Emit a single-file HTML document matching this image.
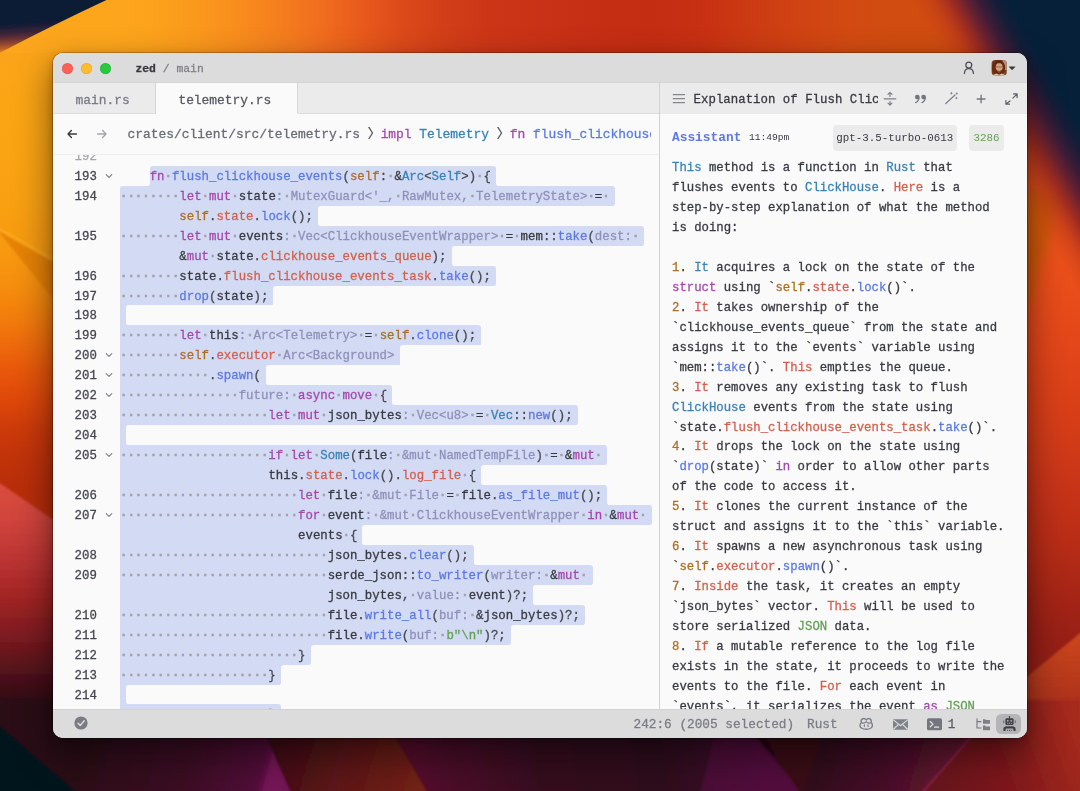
<!DOCTYPE html>
<html lang="en">
<head>
<meta charset="utf-8">
<title>zed / main</title>
<style>
html,body{margin:0;padding:0;}
body{width:1080px;height:791px;overflow:hidden;position:relative;background:#b83014;font-family:"Liberation Mono","Noto Sans CJK SC","DejaVu Sans Mono",monospace;}
.bg{position:absolute;left:0;top:0;display:block;}
.shadow{position:absolute;left:53px;top:53px;width:974px;height:684.6px;border-radius:10px;
 box-shadow:0 0 0 0.6px rgba(0,0,0,.38),0 16px 34px 4px rgba(0,0,0,.42),0 3px 9px rgba(0,0,0,.22);}
.win{position:absolute;left:53px;top:53px;width:974px;height:684.6px;border-radius:10px;overflow:hidden;background:#fafafa;color:#383a41;will-change:transform;}
.abs{position:absolute;}
.titlebar{left:0;top:0;width:974px;height:30.3px;background:#dcdcdd;border-bottom:1px solid #d5d5d6;box-sizing:border-box;}
.tl{position:absolute;top:9.5px;width:11.6px;height:11.6px;border-radius:50%;}
.title{position:absolute;left:82.4px;top:9px;font-size:11.4px;line-height:14px;white-space:pre;color:#7e8087;}
.title b{color:#383a41;font-weight:bold;}
.tabbar{left:0;top:30.3px;width:606.5px;height:30.4px;background:#ebebec;border-bottom:1px solid #dcdcdd;box-sizing:border-box;}
.tab{position:absolute;top:0;height:30.4px;box-sizing:border-box;font-size:12.9px;line-height:35px;white-space:pre;color:#797b83;border-right:1px solid #d6d6d7;border-bottom:1px solid #dcdcdd;}
.tab.on{background:#fafafa;color:#575961;border-bottom:1px solid #fafafa;}
.toolbar{left:0;top:60.7px;width:606.5px;height:41px;background:#fafafa;border-bottom:1px solid #eeeeef;box-sizing:border-box;}
.crumbs{position:absolute;left:74.6px;top:13.5px;font-size:12.92px;line-height:16px;white-space:pre;color:#6a6c74;width:523.6px;overflow:hidden;}
.editor{left:0;top:101.7px;width:606.5px;height:554.6px;overflow:hidden;background:#fafafa;}
.divider{left:606px;top:30.3px;width:1px;height:626px;background:#d1d1d2;}
.sel{position:absolute;background:#d3daf3;}
.wh{position:absolute;background:#fafafa;}
.ln{position:absolute;left:21.6px;width:24px;font-size:12.365px;line-height:19.95px;color:#44464e;white-space:pre;}
.chev{position:absolute;left:50.5px;}
.cl,.al,.ln,.ptitle,.crumbs,.tab,.st,.title{-webkit-text-stroke:.28px currentColor;}
.cl{position:absolute;font-size:12.365px;line-height:19.95px;white-space:pre;color:#383a41;}
.al{position:absolute;left:619px;font-size:12.323px;line-height:19.97px;white-space:pre;color:#383a41;}
.t{color:#383a41}.p{color:#484a50}.k{color:#a449ab}.f{color:#5b79e3}.y{color:#3882b7}.s{color:#ad6e25}
.r{color:#d3604f}.g{color:#649f57}.h{color:#8e91b9}.w{color:#a0a2aa;font-weight:bold;-webkit-text-stroke:.5px currentColor}.n{color:#ad6e25}
.phead{left:607px;top:30.3px;width:367px;height:30.4px;background:#ebebec;border-bottom:1px solid #e8e8e9;box-sizing:border-box;}
.ptitle{position:absolute;left:33.6px;top:8.8px;width:184.6px;overflow:hidden;font-size:12.365px;line-height:16px;white-space:pre;color:#383a41;letter-spacing:.02px;}
.panel{left:607px;top:60.7px;width:367px;height:595.6px;background:#fafafa;overflow:hidden;}
.status{left:0;top:656.3px;width:974px;height:28.3px;background:#dcdcdd;border-top:1px solid #d2d2d3;box-sizing:border-box;}
.st{position:absolute;top:6.7px;font-size:12.75px;line-height:15px;white-space:pre;color:#7b7d85;}
.badge{position:absolute;top:72.3px;height:26px;border-radius:4px;background:#ebebec;font-size:10.85px;line-height:27.4px;white-space:pre;text-align:center;}
svg{display:block;}
.ico{position:absolute;}
</style>
</head>
<body>
<svg class="bg" width="1080" height="791" viewBox="0 0 1080 791">
<defs>
<linearGradient id="gTop" x1="0" y1="0" x2="1080" y2="0" gradientUnits="userSpaceOnUse">
<stop offset="0" stop-color="#fba61c"/><stop offset=".102" stop-color="#fda61c"/><stop offset=".139" stop-color="#fca21c"/>
<stop offset=".185" stop-color="#fa981c"/><stop offset=".222" stop-color="#f98c1d"/><stop offset=".264" stop-color="#f47c1e"/>
<stop offset=".3" stop-color="#f06c1e"/><stop offset=".336" stop-color="#e8591c"/><stop offset=".374" stop-color="#dc491a"/>
<stop offset=".412" stop-color="#d23e18"/><stop offset=".452" stop-color="#cc3617"/><stop offset=".5" stop-color="#c93216"/>
<stop offset=".556" stop-color="#c62e14"/><stop offset=".602" stop-color="#c42d12"/><stop offset=".648" stop-color="#c73012"/>
<stop offset=".694" stop-color="#cc3a13"/><stop offset=".741" stop-color="#d04313"/><stop offset=".787" stop-color="#d24a12"/>
<stop offset=".824" stop-color="#d04c10"/><stop offset="1" stop-color="#d04c10"/>
</linearGradient>
<linearGradient id="gTopV" x1="0" y1="0" x2="0" y2="60" gradientUnits="userSpaceOnUse">
<stop offset="0" stop-color="#fff" stop-opacity=".04"/><stop offset="1" stop-color="#000" stop-opacity=".06"/>
</linearGradient>
<linearGradient id="gTL" x1="0" y1="0" x2="4" y2="57" gradientUnits="userSpaceOnUse">
<stop offset="0" stop-color="#081c36"/><stop offset=".44" stop-color="#111c36"/><stop offset=".59" stop-color="#382338"/>
<stop offset=".7" stop-color="#6a3332"/><stop offset=".81" stop-color="#a6522a"/><stop offset=".93" stop-color="#de821e"/><stop offset="1" stop-color="#f0961c"/>
</linearGradient>
<linearGradient id="gTR" x1="980.8" y1="124.3" x2="1054" y2="82.5" gradientUnits="userSpaceOnUse">
<stop offset="0" stop-color="#c84416" stop-opacity="0"/><stop offset=".23" stop-color="#bc381a" stop-opacity=".55"/><stop offset=".41" stop-color="#9c2a22" stop-opacity=".92"/>
<stop offset=".56" stop-color="#6a2230"/><stop offset=".7" stop-color="#3c1c36"/><stop offset=".86" stop-color="#161d38"/><stop offset="1" stop-color="#07203a"/>
</linearGradient>
<linearGradient id="gLeft" x1="0" y1="53" x2="0" y2="540" gradientUnits="userSpaceOnUse">
<stop offset="0" stop-color="#fba41a"/><stop offset=".0965" stop-color="#fba515"/><stop offset=".199" stop-color="#faa313"/>
<stop offset=".302" stop-color="#f9a012"/><stop offset=".4045" stop-color="#f79a10"/><stop offset=".4867" stop-color="#f58c0e"/>
<stop offset=".548" stop-color="#f27c0c"/><stop offset=".5996" stop-color="#ee6a0c"/><stop offset=".651" stop-color="#e8580b"/>
<stop offset=".7125" stop-color="#de480a"/><stop offset=".774" stop-color="#cc3a0a"/><stop offset=".8357" stop-color="#c0320a"/>
<stop offset=".897" stop-color="#b82e0a"/><stop offset="1" stop-color="#b42c0a"/>
</linearGradient>
<linearGradient id="gLeft2" x1="0" y1="478" x2="0" y2="791" gradientUnits="userSpaceOnUse">
<stop offset=".02" stop-color="#da4c3c"/><stop offset=".134" stop-color="#d0443c"/><stop offset=".262" stop-color="#bc3434"/>
<stop offset=".39" stop-color="#a02424"/><stop offset=".518" stop-color="#781a20"/><stop offset=".645" stop-color="#48101a"/>
<stop offset=".757" stop-color="#220a14"/><stop offset=".853" stop-color="#140a16"/><stop offset="1" stop-color="#0a0f1c"/>
</linearGradient>
<linearGradient id="gRight" x1="0" y1="53" x2="0" y2="737" gradientUnits="userSpaceOnUse">
<stop offset="0" stop-color="#e05a14"/><stop offset=".273" stop-color="#ee521a"/><stop offset=".361" stop-color="#e84c1a"/><stop offset=".434" stop-color="#e2461a"/>
<stop offset=".507" stop-color="#da4018"/><stop offset=".58" stop-color="#d03a18"/><stop offset=".6535" stop-color="#c43218"/>
<stop offset=".7266" stop-color="#b62c16"/><stop offset=".8" stop-color="#a42416"/><stop offset=".858" stop-color="#981f16"/><stop offset="1" stop-color="#8a1c16"/>
</linearGradient>
<linearGradient id="gRight2" x1="0" y1="632" x2="0" y2="791" gradientUnits="userSpaceOnUse">
<stop offset="0" stop-color="#cc481e"/><stop offset=".4" stop-color="#b0341a"/><stop offset=".75" stop-color="#9e2a1a"/><stop offset="1" stop-color="#98261a"/>
</linearGradient>
<linearGradient id="gBot" x1="0" y1="737" x2="0" y2="791" gradientUnits="userSpaceOnUse">
<stop offset="0" stop-color="#260514"/><stop offset="1" stop-color="#4c0a2e"/>
</linearGradient>
<linearGradient id="gB1" x1="75" y1="740" x2="265" y2="791" gradientUnits="userSpaceOnUse">
<stop offset="0" stop-color="#2a0716"/><stop offset=".6" stop-color="#3c0824"/><stop offset=".95" stop-color="#520c38"/><stop offset="1" stop-color="#741456"/>
</linearGradient>
<linearGradient id="gB2" x1="260" y1="740" x2="420" y2="791" gradientUnits="userSpaceOnUse">
<stop offset="0" stop-color="#3a0c14"/><stop offset=".5" stop-color="#5c151a"/><stop offset="1" stop-color="#742212"/>
</linearGradient>
<linearGradient id="gB3" x1="420" y1="791" x2="760" y2="737" gradientUnits="userSpaceOnUse">
<stop offset="0" stop-color="#54082c"/><stop offset=".35" stop-color="#36071f"/><stop offset=".7" stop-color="#2e071c"/><stop offset="1" stop-color="#460b32"/>
</linearGradient>
<linearGradient id="gB4" x1="800" y1="737" x2="960" y2="791" gradientUnits="userSpaceOnUse">
<stop offset="0" stop-color="#2a0718"/><stop offset=".55" stop-color="#460e28"/><stop offset=".9" stop-color="#64162f"/><stop offset="1" stop-color="#7c1e3c"/>
</linearGradient>
<linearGradient id="gB5" x1="930" y1="791" x2="1080" y2="737" gradientUnits="userSpaceOnUse">
<stop offset="0" stop-color="#64151a"/><stop offset=".5" stop-color="#80191c"/><stop offset="1" stop-color="#a62a1c"/>
</linearGradient>
<filter id="bl1" x="-5%" y="-5%" width="110%" height="110%"><feGaussianBlur stdDeviation="0.8"/></filter>
<filter id="bl0" x="-5%" y="-5%" width="110%" height="110%"><feGaussianBlur stdDeviation="0.45"/></filter>
<filter id="bl6" x="-20%" y="-20%" width="140%" height="140%"><feGaussianBlur stdDeviation="5"/></filter>
</defs>
<rect width="1080" height="791" fill="#b83014"/>
<!-- top -->
<rect x="0" y="0" width="1080" height="130" fill="url(#gTop)"/>
<!-- left -->
<rect x="0" y="53" width="80" height="500" fill="url(#gLeft)"/>
<path d="M-2,231 L80,277 L80,332 Z" fill="#dc7406" opacity=".6" filter="url(#bl1)"/>
<path d="M-2,228 L80,275" stroke="#ffc03a" stroke-width="1.6" opacity=".5" filter="url(#bl1)"/>
<path d="M-5,480 L80,538 L80,791 L-5,791 Z" fill="url(#gLeft2)" filter="url(#bl1)"/>
<!-- right -->
<rect x="1000" y="53" width="80" height="700" fill="url(#gRight)"/>
<path d="M1000,190 L1066,190 L1026,318 L1000,318 Z" fill="#c45c06" opacity=".6" filter="url(#bl6)"/>
<path d="M1085,629 L1000,699 L1000,795 L1085,795 Z" fill="url(#gRight2)" filter="url(#bl1)"/>
<!-- bottom -->
<g filter="url(#bl1)">
<rect x="0" y="725" width="1080" height="70" fill="url(#gBot)"/>
<path d="M0,700 L250,700 L292,795 L0,795 Z" fill="url(#gB1)"/>
<path d="M250,700 L374,700 L429,795 L292,795 Z" fill="url(#gB2)"/>
<path d="M374,700 L723,700 L803,795 L429,795 Z" fill="url(#gB3)"/>
<path d="M723,700 L757,737 L803,795 L700,795 Z" fill="#5c0f46" opacity=".55"/>
<path d="M742,700 L838,700 L801,795 Z" fill="#3a0c12"/>
<path d="M838,700 L1004,700 L920,795 L801,795 Z" fill="url(#gB4)"/>
<path d="M1004,700 L1080,700 L1080,795 L920,795 Z" fill="url(#gB5)"/>
<path d="M1004,700 L920,795" stroke="#a83058" stroke-width="1.6" opacity=".7"/>
<path d="M-5,722 L82,797 L-5,797 Z" fill="#05131f"/>
</g>
<!-- corners -->
<path d="M-10,-10 L-10,58 Q56,23 128,-10 Z" fill="url(#gTL)" filter="url(#bl0)"/>
<path d="M860,0 L1080,0 L1080,340 L1000,340 Z" fill="url(#gTR)"/>
</svg>

<div class="shadow"></div>
<div class="win">
  <!-- title bar -->
  <div class="abs titlebar">
    <div class="tl" style="left:8.7px;background:#fe5f57;box-shadow:inset 0 0 0 .5px rgba(0,0,0,.12)"></div>
    <div class="tl" style="left:27.7px;background:#febc2e;box-shadow:inset 0 0 0 .5px rgba(0,0,0,.12)"></div>
    <div class="tl" style="left:46.7px;background:#28c840;box-shadow:inset 0 0 0 .5px rgba(0,0,0,.12)"></div>
    <div class="title"><b>zed</b> / main</div>
  </div>
  <!-- tab bar -->
  <div class="abs tabbar">
    <div class="tab" style="left:0;width:102.5px;padding-left:22.6px">main.rs</div>
    <div class="tab on" style="left:102.5px;width:142px;padding-left:22.9px">telemetry.rs</div>
  </div>
  <!-- toolbar -->
  <div class="abs toolbar">
    <svg class="ico" style="left:13px;top:14px" width="12" height="12" viewBox="0 0 12 12"><path d="M10.4 6 H2 M5.4 2.6 L2 6 L5.4 9.4" fill="none" stroke="#383a41" stroke-width="1.4" stroke-linecap="round" stroke-linejoin="round"/></svg>
    <svg class="ico" style="left:43px;top:14px" width="12" height="12" viewBox="0 0 12 12"><path d="M1.6 6 H10 M6.6 2.6 L10 6 L6.6 9.4" fill="none" stroke="#a4a6ac" stroke-width="1.4" stroke-linecap="round" stroke-linejoin="round"/></svg>
    <div class="crumbs">crates/client/src/telemetry.rs <span style="color:#4e5058">〉</span><span class="k">impl</span> <span class="y">Telemetry</span> <span style="color:#4e5058">〉</span><span class="k">fn</span> <span class="f">flush_clickhouse_events</span></div>
  </div>
  <!-- editor -->
  <div class="abs editor"><div class="abs" style="left:0;top:-101.7px;width:606px;height:685px">
    <div class="ln" style="top:94.5px;color:#a4a6ac">192</div>
<div class="sel" style="left:96.7px;top:112.80px;width:346.3px;height:20.25px;border-radius:2.8px 2.8px 0px 0"></div>
<div class="sel" style="left:67.0px;top:132.75px;width:494.7px;height:20.25px;border-radius:2.8px 2.8px 2.8px 0"></div>
<div class="sel" style="left:67.0px;top:152.70px;width:197.9px;height:20.25px;border-radius:0px 0px 0px 0"></div>
<div class="sel" style="left:67.0px;top:172.65px;width:524.4px;height:20.25px;border-radius:0px 2.8px 2.8px 0"></div>
<div class="sel" style="left:67.0px;top:192.60px;width:331.5px;height:20.25px;border-radius:0px 0px 0px 0"></div>
<div class="sel" style="left:67.0px;top:212.55px;width:376.0px;height:20.25px;border-radius:0px 2.8px 2.8px 0"></div>
<div class="sel" style="left:67.0px;top:232.50px;width:153.4px;height:20.25px;border-radius:0px 0px 2.8px 0"></div>
<div class="sel" style="left:67.0px;top:252.45px;width:6.0px;height:20.25px;border-radius:0px 0px 0px 0"></div>
<div class="sel" style="left:67.0px;top:272.40px;width:361.2px;height:20.25px;border-radius:0px 2.8px 2.8px 0"></div>
<div class="sel" style="left:67.0px;top:292.35px;width:279.5px;height:20.25px;border-radius:0px 0px 2.8px 0"></div>
<div class="sel" style="left:67.0px;top:312.30px;width:146.0px;height:20.25px;border-radius:0px 0px 0px 0"></div>
<div class="sel" style="left:67.0px;top:332.25px;width:272.1px;height:20.25px;border-radius:0px 2.8px 0px 0"></div>
<div class="sel" style="left:67.0px;top:352.20px;width:457.6px;height:20.25px;border-radius:0px 2.8px 2.8px 0"></div>
<div class="sel" style="left:67.0px;top:372.15px;width:6.0px;height:20.25px;border-radius:0px 0px 0px 0"></div>
<div class="sel" style="left:67.0px;top:392.10px;width:487.3px;height:20.25px;border-radius:0px 2.8px 2.8px 0"></div>
<div class="sel" style="left:67.0px;top:412.05px;width:361.2px;height:20.25px;border-radius:0px 0px 0px 0"></div>
<div class="sel" style="left:67.0px;top:432.00px;width:487.3px;height:20.25px;border-radius:0px 2.8px 0px 0"></div>
<div class="sel" style="left:67.0px;top:451.95px;width:531.8px;height:20.25px;border-radius:0px 2.8px 2.8px 0"></div>
<div class="sel" style="left:67.0px;top:471.90px;width:242.4px;height:20.25px;border-radius:0px 0px 0px 0"></div>
<div class="sel" style="left:67.0px;top:491.85px;width:353.7px;height:20.25px;border-radius:0px 2.8px 0px 0"></div>
<div class="sel" style="left:67.0px;top:511.80px;width:472.5px;height:20.25px;border-radius:0px 2.8px 2.8px 0"></div>
<div class="sel" style="left:67.0px;top:531.75px;width:413.1px;height:20.25px;border-radius:0px 0px 0px 0"></div>
<div class="sel" style="left:67.0px;top:551.70px;width:465.0px;height:20.25px;border-radius:0px 2.8px 2.8px 0"></div>
<div class="sel" style="left:67.0px;top:571.65px;width:390.8px;height:20.25px;border-radius:0px 0px 2.8px 0"></div>
<div class="sel" style="left:67.0px;top:591.60px;width:190.5px;height:20.25px;border-radius:0px 0px 2.8px 0"></div>
<div class="sel" style="left:67.0px;top:611.55px;width:160.8px;height:20.25px;border-radius:0px 0px 2.8px 0"></div>
<div class="sel" style="left:67.0px;top:631.50px;width:6.0px;height:20.25px;border-radius:0px 0px 0px 0"></div>
<div class="sel" style="left:67.0px;top:651.45px;width:160.8px;height:20.25px;border-radius:0px 2.8px 0px 0"></div>
<div class="sel" style="left:442.5px;top:129.95px;width:3.3px;height:3.0999999999999996px"></div>
<div class="sel" style="left:93.9px;top:129.95px;width:3.3px;height:3.0999999999999996px"></div>
<div class="sel" style="left:264.4px;top:152.40px;width:3.3px;height:3.0999999999999996px"></div>
<div class="sel" style="left:264.4px;top:169.85px;width:3.3px;height:3.0999999999999996px"></div>
<div class="sel" style="left:398.0px;top:192.30px;width:3.3px;height:3.0999999999999996px"></div>
<div class="sel" style="left:398.0px;top:209.75px;width:3.3px;height:3.0999999999999996px"></div>
<div class="sel" style="left:219.9px;top:232.20px;width:3.3px;height:3.0999999999999996px"></div>
<div class="sel" style="left:72.5px;top:252.15px;width:3.3px;height:3.0999999999999996px"></div>
<div class="sel" style="left:72.5px;top:269.60px;width:3.3px;height:3.0999999999999996px"></div>
<div class="sel" style="left:346.0px;top:292.05px;width:3.3px;height:3.0999999999999996px"></div>
<div class="sel" style="left:212.5px;top:312.00px;width:3.3px;height:3.0999999999999996px"></div>
<div class="sel" style="left:212.5px;top:329.45px;width:3.3px;height:3.0999999999999996px"></div>
<div class="sel" style="left:338.6px;top:349.40px;width:3.3px;height:3.0999999999999996px"></div>
<div class="sel" style="left:72.5px;top:371.85px;width:3.3px;height:3.0999999999999996px"></div>
<div class="sel" style="left:72.5px;top:389.30px;width:3.3px;height:3.0999999999999996px"></div>
<div class="sel" style="left:427.7px;top:411.75px;width:3.3px;height:3.0999999999999996px"></div>
<div class="sel" style="left:427.7px;top:429.20px;width:3.3px;height:3.0999999999999996px"></div>
<div class="sel" style="left:553.8px;top:449.15px;width:3.3px;height:3.0999999999999996px"></div>
<div class="sel" style="left:308.9px;top:471.60px;width:3.3px;height:3.0999999999999996px"></div>
<div class="sel" style="left:308.9px;top:489.05px;width:3.3px;height:3.0999999999999996px"></div>
<div class="sel" style="left:420.2px;top:509.00px;width:3.3px;height:3.0999999999999996px"></div>
<div class="sel" style="left:479.6px;top:531.45px;width:3.3px;height:3.0999999999999996px"></div>
<div class="sel" style="left:479.6px;top:548.90px;width:3.3px;height:3.0999999999999996px"></div>
<div class="sel" style="left:457.3px;top:571.35px;width:3.3px;height:3.0999999999999996px"></div>
<div class="sel" style="left:257.0px;top:591.30px;width:3.3px;height:3.0999999999999996px"></div>
<div class="sel" style="left:227.3px;top:611.25px;width:3.3px;height:3.0999999999999996px"></div>
<div class="sel" style="left:72.5px;top:631.20px;width:3.3px;height:3.0999999999999996px"></div>
<div class="sel" style="left:72.5px;top:648.65px;width:3.3px;height:3.0999999999999996px"></div>
<div class="wh" style="left:443.0px;top:112.80px;width:163.0px;height:19.95px;border-radius:0px 0 0 2.8px"></div>
<div class="wh" style="left:66.0px;top:112.80px;width:30.7px;height:19.95px;border-radius:0 0 2.8px 0"></div>
<div class="wh" style="left:264.9px;top:152.70px;width:341.1px;height:19.95px;border-radius:2.8px 0 0 2.8px"></div>
<div class="wh" style="left:398.5px;top:192.60px;width:207.5px;height:19.95px;border-radius:2.8px 0 0 2.8px"></div>
<div class="wh" style="left:220.4px;top:232.50px;width:385.6px;height:19.95px;border-radius:2.8px 0 0 0px"></div>
<div class="wh" style="left:73.0px;top:252.45px;width:533.0px;height:19.95px;border-radius:2.8px 0 0 2.8px"></div>
<div class="wh" style="left:346.5px;top:292.35px;width:259.5px;height:19.95px;border-radius:2.8px 0 0 0px"></div>
<div class="wh" style="left:213.0px;top:312.30px;width:393.0px;height:19.95px;border-radius:2.8px 0 0 2.8px"></div>
<div class="wh" style="left:339.1px;top:332.25px;width:266.9px;height:19.95px;border-radius:0px 0 0 2.8px"></div>
<div class="wh" style="left:73.0px;top:372.15px;width:533.0px;height:19.95px;border-radius:2.8px 0 0 2.8px"></div>
<div class="wh" style="left:428.2px;top:412.05px;width:177.8px;height:19.95px;border-radius:2.8px 0 0 2.8px"></div>
<div class="wh" style="left:554.3px;top:432.00px;width:51.7px;height:19.95px;border-radius:0px 0 0 2.8px"></div>
<div class="wh" style="left:309.4px;top:471.90px;width:296.6px;height:19.95px;border-radius:2.8px 0 0 2.8px"></div>
<div class="wh" style="left:420.7px;top:491.85px;width:185.3px;height:19.95px;border-radius:0px 0 0 2.8px"></div>
<div class="wh" style="left:480.1px;top:531.75px;width:125.9px;height:19.95px;border-radius:2.8px 0 0 2.8px"></div>
<div class="wh" style="left:457.8px;top:571.65px;width:148.2px;height:19.95px;border-radius:2.8px 0 0 0px"></div>
<div class="wh" style="left:257.5px;top:591.60px;width:348.5px;height:19.95px;border-radius:2.8px 0 0 0px"></div>
<div class="wh" style="left:227.8px;top:611.55px;width:378.2px;height:19.95px;border-radius:2.8px 0 0 0px"></div>
<div class="wh" style="left:73.0px;top:631.50px;width:533.0px;height:19.95px;border-radius:2.8px 0 0 2.8px"></div>
<div class="ln" style="top:114.80px">193</div>
<svg class="chev" style="top:118.80px" width="10" height="8" viewBox="0 0 10 8"><path d="M2.2 2.6 L5 5.3 L7.8 2.6" fill="none" stroke="#7b7d85" stroke-width="1.1" stroke-linecap="round" stroke-linejoin="round"/></svg>
<div class="cl" style="left:96.68px;top:114.80px"><span class="k">fn</span><span class="w">·</span><span class="f">flush_clickhouse_events</span><span class="p">(</span><span class="s">self</span><span class="p">:</span><span class="w">·</span><span class="t">&amp;</span><span class="y">Arc</span><span class="p">&lt;</span><span class="y">Self</span><span class="p">&gt;)</span><span class="w">·</span><span class="p">{</span></div>
<div class="ln" style="top:134.75px">194</div>
<div class="cl" style="left:67.00px;top:134.75px"><span class="w">········</span><span class="k">let</span><span class="w">·</span><span class="k">mut</span><span class="w">·</span><span class="t">state</span><span class="h">:</span><span class="w">·</span><span class="h">MutexGuard&lt;'_,</span><span class="w">·</span><span class="h">RawMutex,</span><span class="w">·</span><span class="h">TelemetryState&gt;</span><span class="w">·</span><span class="t">=</span><span class="w">·</span></div>
<div class="cl" style="left:126.36px;top:154.70px"><span class="s">self</span><span class="p">.</span><span class="r">state</span><span class="p">.</span><span class="f">lock</span><span class="p">();</span></div>
<div class="ln" style="top:174.65px">195</div>
<div class="cl" style="left:67.00px;top:174.65px"><span class="w">········</span><span class="k">let</span><span class="w">·</span><span class="k">mut</span><span class="w">·</span><span class="t">events</span><span class="h">:</span><span class="w">·</span><span class="h">Vec&lt;ClickhouseEventWrapper&gt;</span><span class="w">·</span><span class="t">=</span><span class="w">·</span><span class="t">mem</span><span class="p">::</span><span class="f">take</span><span class="p">(</span><span class="h">dest:</span><span class="w">·</span></div>
<div class="cl" style="left:126.36px;top:194.60px"><span class="t">&amp;</span><span class="k">mut</span><span class="w">·</span><span class="t">state</span><span class="p">.</span><span class="r">clickhouse_events_queue</span><span class="p">);</span></div>
<div class="ln" style="top:214.55px">196</div>
<div class="cl" style="left:67.00px;top:214.55px"><span class="w">········</span><span class="t">state</span><span class="p">.</span><span class="r">flush_clickhouse_events_task</span><span class="p">.</span><span class="f">take</span><span class="p">();</span></div>
<div class="ln" style="top:234.50px">197</div>
<div class="cl" style="left:67.00px;top:234.50px"><span class="w">········</span><span class="f">drop</span><span class="p">(</span><span class="t">state</span><span class="p">);</span></div>
<div class="ln" style="top:254.45px">198</div>
<div class="ln" style="top:274.40px">199</div>
<div class="cl" style="left:67.00px;top:274.40px"><span class="w">········</span><span class="k">let</span><span class="w">·</span><span class="t">this</span><span class="h">:</span><span class="w">·</span><span class="h">Arc&lt;Telemetry&gt;</span><span class="w">·</span><span class="t">=</span><span class="w">·</span><span class="s">self</span><span class="p">.</span><span class="f">clone</span><span class="p">();</span></div>
<div class="ln" style="top:294.35px">200</div>
<svg class="chev" style="top:298.35px" width="10" height="8" viewBox="0 0 10 8"><path d="M2.2 2.6 L5 5.3 L7.8 2.6" fill="none" stroke="#7b7d85" stroke-width="1.1" stroke-linecap="round" stroke-linejoin="round"/></svg>
<div class="cl" style="left:67.00px;top:294.35px"><span class="w">········</span><span class="s">self</span><span class="p">.</span><span class="r">executor</span><span class="w">·</span><span class="h">Arc&lt;Background&gt;</span></div>
<div class="ln" style="top:314.30px">201</div>
<svg class="chev" style="top:318.30px" width="10" height="8" viewBox="0 0 10 8"><path d="M2.2 2.6 L5 5.3 L7.8 2.6" fill="none" stroke="#7b7d85" stroke-width="1.1" stroke-linecap="round" stroke-linejoin="round"/></svg>
<div class="cl" style="left:67.00px;top:314.30px"><span class="w">············</span><span class="p">.</span><span class="f">spawn</span><span class="p">(</span></div>
<div class="ln" style="top:334.25px">202</div>
<svg class="chev" style="top:338.25px" width="10" height="8" viewBox="0 0 10 8"><path d="M2.2 2.6 L5 5.3 L7.8 2.6" fill="none" stroke="#7b7d85" stroke-width="1.1" stroke-linecap="round" stroke-linejoin="round"/></svg>
<div class="cl" style="left:67.00px;top:334.25px"><span class="w">················</span><span class="h">future:</span><span class="w">·</span><span class="k">async</span><span class="w">·</span><span class="k">move</span><span class="w">·</span><span class="p">{</span></div>
<div class="ln" style="top:354.20px">203</div>
<div class="cl" style="left:67.00px;top:354.20px"><span class="w">····················</span><span class="k">let</span><span class="w">·</span><span class="k">mut</span><span class="w">·</span><span class="t">json_bytes</span><span class="h">:</span><span class="w">·</span><span class="h">Vec&lt;u8&gt;</span><span class="w">·</span><span class="t">=</span><span class="w">·</span><span class="y">Vec</span><span class="p">::</span><span class="f">new</span><span class="p">();</span></div>
<div class="ln" style="top:374.15px">204</div>
<div class="ln" style="top:394.10px">205</div>
<svg class="chev" style="top:398.10px" width="10" height="8" viewBox="0 0 10 8"><path d="M2.2 2.6 L5 5.3 L7.8 2.6" fill="none" stroke="#7b7d85" stroke-width="1.1" stroke-linecap="round" stroke-linejoin="round"/></svg>
<div class="cl" style="left:67.00px;top:394.10px"><span class="w">····················</span><span class="k">if</span><span class="w">·</span><span class="k">let</span><span class="w">·</span><span class="y">Some</span><span class="p">(</span><span class="t">file</span><span class="h">:</span><span class="w">·</span><span class="h">&amp;mut</span><span class="w">·</span><span class="h">NamedTempFile</span><span class="p">)</span><span class="w">·</span><span class="t">=</span><span class="w">·</span><span class="t">&amp;</span><span class="k">mut</span><span class="w">·</span></div>
<div class="cl" style="left:215.40px;top:414.05px"><span class="t">this</span><span class="p">.</span><span class="r">state</span><span class="p">.</span><span class="f">lock</span><span class="p">().</span><span class="r">log_file</span><span class="w">·</span><span class="p">{</span></div>
<div class="ln" style="top:434.00px">206</div>
<div class="cl" style="left:67.00px;top:434.00px"><span class="w">························</span><span class="k">let</span><span class="w">·</span><span class="t">file</span><span class="h">:</span><span class="w">·</span><span class="h">&amp;mut</span><span class="w">·</span><span class="h">File</span><span class="w">·</span><span class="t">=</span><span class="w">·</span><span class="t">file</span><span class="p">.</span><span class="f">as_file_mut</span><span class="p">();</span></div>
<div class="ln" style="top:453.95px">207</div>
<svg class="chev" style="top:457.95px" width="10" height="8" viewBox="0 0 10 8"><path d="M2.2 2.6 L5 5.3 L7.8 2.6" fill="none" stroke="#7b7d85" stroke-width="1.1" stroke-linecap="round" stroke-linejoin="round"/></svg>
<div class="cl" style="left:67.00px;top:453.95px"><span class="w">························</span><span class="k">for</span><span class="w">·</span><span class="t">event</span><span class="h">:</span><span class="w">·</span><span class="h">&amp;mut</span><span class="w">·</span><span class="h">ClickhouseEventWrapper</span><span class="w">·</span><span class="k">in</span><span class="w">·</span><span class="t">&amp;</span><span class="k">mut</span><span class="w">·</span></div>
<div class="cl" style="left:245.08px;top:473.90px"><span class="t">events</span><span class="w">·</span><span class="p">{</span></div>
<div class="ln" style="top:493.85px">208</div>
<div class="cl" style="left:67.00px;top:493.85px"><span class="w">····························</span><span class="t">json_bytes</span><span class="p">.</span><span class="f">clear</span><span class="p">();</span></div>
<div class="ln" style="top:513.80px">209</div>
<div class="cl" style="left:67.00px;top:513.80px"><span class="w">····························</span><span class="t">serde_json</span><span class="p">::</span><span class="f">to_writer</span><span class="p">(</span><span class="h">writer:</span><span class="w">·</span><span class="t">&amp;</span><span class="k">mut</span><span class="w">·</span></div>
<div class="cl" style="left:274.76px;top:533.75px"><span class="t">json_bytes</span><span class="p">,</span><span class="w">·</span><span class="h">value:</span><span class="w">·</span><span class="t">event</span><span class="p">)?;</span></div>
<div class="ln" style="top:553.70px">210</div>
<div class="cl" style="left:67.00px;top:553.70px"><span class="w">····························</span><span class="t">file</span><span class="p">.</span><span class="f">write_all</span><span class="p">(</span><span class="h">buf:</span><span class="w">·</span><span class="t">&amp;json_bytes</span><span class="p">)?;</span></div>
<div class="ln" style="top:573.65px">211</div>
<div class="cl" style="left:67.00px;top:573.65px"><span class="w">····························</span><span class="t">file</span><span class="p">.</span><span class="f">write</span><span class="p">(</span><span class="h">buf:</span><span class="w">·</span><span class="g">b"\n"</span><span class="p">)?;</span></div>
<div class="ln" style="top:593.60px">212</div>
<div class="cl" style="left:67.00px;top:593.60px"><span class="w">························</span><span class="p">}</span></div>
<div class="ln" style="top:613.55px">213</div>
<div class="cl" style="left:67.00px;top:613.55px"><span class="w">····················</span><span class="p">}</span></div>
<div class="ln" style="top:633.50px">214</div>
<div class="cl" style="left:67.00px;top:653.45px"><span class="w">····················</span><span class="p">}</span></div>
  </div></div>
  <div class="abs divider"></div>
  <!-- panel header -->
  <div class="abs phead">
    <svg class="ico" style="left:11.6px;top:10.2px" width="14" height="12" viewBox="0 0 14 12"><path d="M1.2 1.6 H12.6 M1.2 5.6 H12.6 M1.2 9.6 H12.6" stroke="#85878e" stroke-width="1.15" stroke-linecap="round"/></svg>
    <div class="ptitle">Explanation of Flush Clic</div>
  </div>
  <!-- panel -->
  <div class="abs panel"><div class="abs" style="left:-607px;top:-60.7px;width:974px;height:685px">
    <div class="abs" style="left:619px;top:76.4px;font-size:12.85px;line-height:18px;font-weight:bold;color:#5b79e3;white-space:pre">Assistant</div>
    <div class="abs" style="left:696px;top:78.2px;font-size:9.6px;line-height:14px;color:#383a41;white-space:pre">11:49pm</div>
    <div class="badge" style="left:779.5px;width:124.5px;color:#383a41">gpt-3.5-turbo-0613</div>
    <div class="badge" style="left:916px;width:35px;color:#649f57">3286</div>
<div class="al" style="top:105.90px"><span class="y">This</span><span class="t"> method is a function in </span><span class="y">Rust</span><span class="t"> that</span></div>
<div class="al" style="top:125.87px"><span class="t">flushes events to </span><span class="y">ClickHouse</span><span class="t">. </span><span class="r">Here</span><span class="t"> is a</span></div>
<div class="al" style="top:145.84px"><span class="t">step-by-step explanation of what the method</span></div>
<div class="al" style="top:165.81px"><span class="t">is doing:</span></div>
<div class="al" style="top:205.75px"><span class="n">1</span><span class="t">. </span><span class="y">It</span><span class="t"> acquires a lock on the state of the</span></div>
<div class="al" style="top:225.72px"><span class="k">struct</span><span class="t"> using `</span><span class="s">self</span><span class="t">.</span><span class="r">state</span><span class="t">.</span><span class="f">lock</span><span class="t">()`.</span></div>
<div class="al" style="top:245.69px"><span class="n">2</span><span class="t">. </span><span class="r">It</span><span class="t"> takes ownership of the</span></div>
<div class="al" style="top:265.66px"><span class="t">`clickhouse_events_queue` from the state and</span></div>
<div class="al" style="top:285.63px"><span class="t">assigns it to the `events` variable using</span></div>
<div class="al" style="top:305.60px"><span class="t">`mem::</span><span class="f">take</span><span class="t">()`. </span><span class="r">This</span><span class="t"> empties the queue.</span></div>
<div class="al" style="top:325.57px"><span class="n">3</span><span class="t">. </span><span class="r">It</span><span class="t"> removes any existing task to flush</span></div>
<div class="al" style="top:345.54px"><span class="y">ClickHouse</span><span class="t"> events from the state using</span></div>
<div class="al" style="top:365.51px"><span class="t">`state.</span><span class="r">flush_clickhouse_events_task</span><span class="t">.</span><span class="f">take</span><span class="t">()`.</span></div>
<div class="al" style="top:385.48px"><span class="n">4</span><span class="t">. </span><span class="r">It</span><span class="t"> drops the lock on the state using</span></div>
<div class="al" style="top:405.45px"><span class="t">`</span><span class="f">drop</span><span class="t">(state)` </span><span class="k">in</span><span class="t"> order to allow other parts</span></div>
<div class="al" style="top:425.42px"><span class="t">of the code to access it.</span></div>
<div class="al" style="top:445.39px"><span class="n">5</span><span class="t">. </span><span class="r">It</span><span class="t"> clones the current instance of the</span></div>
<div class="al" style="top:465.36px"><span class="t">struct and assigns it to the `this` variable.</span></div>
<div class="al" style="top:485.33px"><span class="n">6</span><span class="t">. </span><span class="r">It</span><span class="t"> spawns a new asynchronous task using</span></div>
<div class="al" style="top:505.30px"><span class="t">`</span><span class="s">self</span><span class="t">.</span><span class="r">executor</span><span class="t">.</span><span class="f">spawn</span><span class="t">()`.</span></div>
<div class="al" style="top:525.27px"><span class="n">7</span><span class="t">. </span><span class="r">Inside</span><span class="t"> the task, it creates an empty</span></div>
<div class="al" style="top:545.24px"><span class="t">`json_bytes` vector. </span><span class="r">This</span><span class="t"> will be used to</span></div>
<div class="al" style="top:565.21px"><span class="t">store serialized </span><span class="g">JSON</span><span class="t"> data.</span></div>
<div class="al" style="top:585.18px"><span class="n">8</span><span class="t">. </span><span class="r">If</span><span class="t"> a mutable reference to the log file</span></div>
<div class="al" style="top:605.15px"><span class="t">exists in the state, it proceeds to write the</span></div>
<div class="al" style="top:625.12px"><span class="t">events to the file. </span><span class="r">For</span><span class="t"> each event in</span></div>
<div class="al" style="top:645.09px"><span class="t">`events`, it serializes the event </span><span class="k">as</span><span class="t"> </span><span class="g">JSON</span></div>
  </div></div>
  <!-- header icons overlay (page coordinates) -->
  <svg class="ico" style="left:0;top:0" width="974" height="62" viewBox="53 53 974 62">
    <g fill="none" stroke="#4c4e58" stroke-width="1.25" stroke-linecap="round">
      <circle cx="968.8" cy="65.1" r="2.95"/>
      <path d="M964.4 73.5 C964.4 70 966.2 68.5 968.9 68.5 C971.6 68.5 973.4 70 973.4 73.5"/>
    </g>
    <clipPath id="avc"><rect x="991.6" y="60.1" width="15.2" height="15.5" rx="3.6"/></clipPath>
    <g clip-path="url(#avc)">
      <rect x="990" y="59" width="19" height="19" fill="#7c4424"/>
      <rect x="1002.5" y="59" width="6" height="11" fill="#a8977e"/>
      <ellipse cx="998.5" cy="67.8" rx="6.7" ry="8.2" fill="#6c2c10"/>
      <ellipse cx="999.2" cy="78.2" rx="8.5" ry="4.6" fill="#dacab2"/>
      <ellipse cx="999.2" cy="67.3" rx="3.4" ry="4.7" fill="#d3a180"/>
      <path d="M995.6 68.6 C995.8 72.6 997.4 74.6 999.1 74.6 C1000.8 74.6 1002.4 72.6 1002.6 68.6 C1001.8 70.6 1000.6 71 999.1 71 C997.6 71 996.4 70.6 995.6 68.6Z" fill="#63290f"/>
      <path d="M997.6 71.6 Q999.1 72.5 1000.6 71.6" stroke="#d9b09a" stroke-width=".5" fill="none"/>
      <path d="M995.2 65.6 C995 62.4 996.8 61 999 61 C1001.2 61 1003 62.4 1002.9 65.6 C1002.2 63.8 1001 63.3 999 63.3 C997 63.3 995.9 63.8 995.2 65.6Z" fill="#5e260e"/>
      <path d="M996 66.9 H1002.2" stroke="#5a3a2c" stroke-width=".7" opacity=".75"/>
    </g>
    <path d="M1009.2 66.5 H1015 Q1015.6 66.5 1015.2 67 L1012.5 69.8 Q1012.1 70.2 1011.7 69.8 L1009 67 Q1008.6 66.5 1009.2 66.5Z" fill="#383a41"/>
    <!-- split -->
    <g fill="none" stroke="#7e8087" stroke-width="1.15" stroke-linecap="round" stroke-linejoin="round">
      <path d="M884.2 98.8 H895.8"/>
      <path d="M890 96.4 V92.6 M888 94.4 L890 92.4 L892 94.4 M890 101.2 V105 M888 103.2 L890 105.2 L892 103.2"/>
    </g>
    <!-- quote -->
    <g fill="#74767e" stroke="none">
      <circle cx="917.3" cy="97.1" r="2.35"/><circle cx="923.6" cy="97.1" r="2.35"/>
    </g>
    <g fill="none" stroke="#74767e" stroke-width="1.15" stroke-linecap="round">
      <path d="M919 97.6 C919 100.2 917.8 101.8 915.6 102.6"/><path d="M925.3 97.6 C925.3 100.2 924.1 101.8 921.9 102.6"/>
    </g>
    <!-- wand -->
    <path d="M945.8 103.5 L955 95" stroke="#7e8087" stroke-width="1.2" stroke-linecap="round" fill="none"/>
    <g stroke="#7e8087" stroke-width=".8" stroke-linecap="round">
      <path d="M951.4 92.4 v1.7 M950.55 93.25 h1.7 M956.8 92.8 v1.5 M956.05 93.55 h1.5 M956.4 97.3 v1.5 M955.65 98.05 h1.5"/>
    </g>
    <!-- plus -->
    <path d="M981.1 95.2 V102.8 M977.2 99 H985" stroke="#74767e" stroke-width="1.35" stroke-linecap="round" fill="none"/>
    <!-- expand -->
    <g fill="none" stroke="#5f6169" stroke-width="1.25" stroke-linecap="round" stroke-linejoin="round">
      <path d="M1012.9 98.1 L1016.9 94.1 M1013.5 93.9 H1017.1 V97.5"/>
      <path d="M1010 100.9 L1006.1 104 M1005.9 100.6 V104.2 H1009.5"/>
    </g>
  </svg>
  <!-- status bar -->
  <div class="abs status">
    <svg class="ico" style="left:20.8px;top:5.8px" width="14" height="14" viewBox="0 0 14 14"><circle cx="7" cy="7" r="6.6" fill="#7a7c84"/><path d="M4 7.2 L6.2 9.4 L10.2 4.8" fill="none" stroke="#dcdcdd" stroke-width="1.5" stroke-linecap="round" stroke-linejoin="round"/></svg>
    <div class="st" style="left:580.5px">242:6 (2005 selected)</div>
    <div class="st" style="left:754px">Rust</div>
    <!-- copilot -->
    <svg class="ico" style="left:806px;top:6.6px" width="14.4" height="13.4" viewBox="0 0 15 14"><path d="M3.2 2.2 C4.6 1.2 6.4 1.6 7.5 3 C8.6 1.6 10.4 1.2 11.8 2.2 C12.8 3 12.9 4.6 12.5 5.8 C13.6 6.6 14 7.6 14 8.8 C14 11.4 10.8 12.8 7.5 12.8 C4.2 12.8 1 11.4 1 8.8 C1 7.6 1.4 6.6 2.5 5.8 C2.1 4.6 2.2 3 3.2 2.2 Z" fill="none" stroke="#7c7e86" stroke-width="1.45"/><path d="M5.6 8.2 v1.6 M9.4 8.2 v1.6" stroke="#7c7e86" stroke-width="1.3" stroke-linecap="round"/><path d="M2.8 5.9 C4.4 6.7 6.2 6.3 7.5 4.9 C8.8 6.3 10.6 6.7 12.2 5.9" fill="none" stroke="#7c7e86" stroke-width="1.2"/></svg>
    <!-- mail -->
    <svg class="ico" style="left:840px;top:8.3px" width="15" height="11" viewBox="0 0 16 11"><rect x="0" y="0" width="16" height="11" rx="1" fill="#808289"/><path d="M0.4 0.6 L8 6.8 L15.6 0.6 M0.4 10.6 L5.9 5.3 M15.6 10.6 L10.1 5.3" fill="none" stroke="#dcdcdd" stroke-width="1.25"/></svg>
    <!-- terminal -->
    <svg class="ico" style="left:874px;top:7.8px" width="15" height="12.5" viewBox="0 0 16 13"><rect width="16" height="13" rx="2" fill="#74767e"/><path d="M3.4 3.6 L6.4 6.4 L3.4 9.2 M8 9.6 H12.4" fill="none" stroke="#e4e4e5" stroke-width="1.3" stroke-linecap="round" stroke-linejoin="round"/></svg>
    <div class="st" style="left:894.8px;color:#5c5e66">1</div>
    <!-- project tree -->
    <svg class="ico" style="left:922.5px;top:7.5px" width="15" height="13" viewBox="0 0 15 13"><path d="M1 0.6 V10 H5.4 M1 3.6 H5.4" fill="none" stroke="#74767e" stroke-width="1.1"/><path d="M7 1.2 h2.2 l.8 .8 h4 v3.8 h-7 z M7 7.6 h2.2 l.8 .8 h4 v3.8 h-7 z" fill="#7e8087"/></svg>
    <!-- robot button -->
    <div class="abs" style="left:943.2px;top:3.4px;width:24.6px;height:20.6px;border-radius:5.5px;background:#b5b5b7"></div>
    <svg class="ico" style="left:948.5px;top:5.5px" width="15" height="16" viewBox="0 0 15 16"><path d="M7.5 0.6 V2.4" stroke="#3e4047" stroke-width="1.1" stroke-linecap="round"/><rect x="3.4" y="2.2" width="8.2" height="6.8" rx="1.3" fill="#3e4047"/><rect x="1.2" y="4.2" width="1.1" height="3" rx=".5" fill="#6c6e76"/><rect x="12.7" y="4.2" width="1.1" height="3" rx=".5" fill="#6c6e76"/><circle cx="5.8" cy="4.8" r=".9" fill="#b8b8ba"/><circle cx="9.2" cy="4.8" r=".9" fill="#b8b8ba"/><path d="M5.2 7.3 H9.8" stroke="#b8b8ba" stroke-width=".9" stroke-dasharray="1.1 .7"/><path d="M1.4 15 V13 C1.4 11.2 2.8 10.2 4.6 10.2 H10.4 C12.2 10.2 13.6 11.2 13.6 13 V15 H11.4 V13.4 C11.4 12.8 11 12.5 10.4 12.5 H4.6 C4 12.5 3.6 12.8 3.6 13.4 V15 Z" fill="#3e4047"/><path d="M5.6 14.9 v-1.2 M7.5 14.9 v-1.2 M9.4 14.9 v-1.2" stroke="#3e4047" stroke-width=".9"/></svg>
  </div>
</div>
</body>
</html>
